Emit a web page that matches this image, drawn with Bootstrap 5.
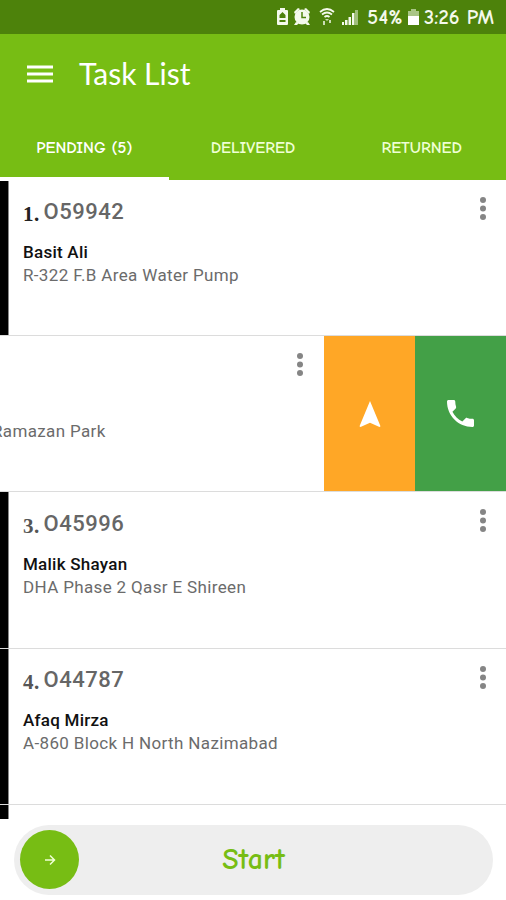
<!DOCTYPE html>
<html lang="en">
<head>
<meta charset="utf-8">
<meta name="viewport" content="width=device-width, initial-scale=1">
<title>Task List</title>
<link href="https://cdn.jsdelivr.net/npm/bootstrap@5.3.0/dist/css/bootstrap.min.css" rel="stylesheet">
<style>
body{font-family:Roboto,"Liberation Sans",sans-serif;height:900px;overflow:hidden;background:#fff}
.status{height:34px;background:#4d820b;color:#f4f9ec;font:700 20.5px/34px "Comic Neue",Lato,sans-serif;padding-right:12px}
.status span{white-space:nowrap;position:relative;top:1px}
.status .pct{letter-spacing:.5px;margin-left:6px}
.appbar{background:#77bd14;height:146px;color:#fff}
.titlebar{height:80px;padding-left:27px;gap:26px}
.titlebar h1{font:400 30px/34px Lato,sans-serif;letter-spacing:0;padding-bottom:2px}
.tabs .tab{width:168.67px;height:66px;border:0;border-bottom:3px solid transparent;background:none;color:#efffd5;font:700 16.7px/20px "Comic Neue",Lato,sans-serif;padding:4px 0 0}
.tabs .tab.active{border-bottom:3px solid #fff;color:#fff}
.task{height:156.2px;border-bottom:1.5px solid #dcdcdc}
.stripe{width:9px;background:#000;border-right:1px solid #888;flex:none}
.task:first-child .stripe{margin-top:1px}
.info{padding:18.5px 0 0 14px;white-space:nowrap}
.code{height:26px;color:#666;font-size:22px;line-height:26px;font-weight:500;letter-spacing:.5px}
.idx{font:700 21px/26px "Liberation Serif",serif;color:#222;width:20.5px;letter-spacing:.5px;position:relative;top:2px}
.idx.soft{color:#555}
.person{margin-top:16px;color:#111;font-size:17px;line-height:22px;font-weight:500;letter-spacing:.25px}
.place{font-size:17px;line-height:25px;color:#6b6b6b;letter-spacing:.35px}
.more{margin:15px 15px 0 auto;align-self:flex-start;line-height:0}
.act{width:91px;flex:none}
.go{background:#ffa726}.call{background:#43a047;width:91.5px}
.slid{width:324px;flex:none;overflow:hidden}
.slid .place{margin:83px 0 0 -8px;white-space:nowrap}
.slid .more{margin-right:16px}
.tail{height:14px}
.starter{margin:6px 13px 0 14px;height:70px;border-radius:35px;background:#eee;padding-left:6px;color:#77bd14}
.knob{width:59px;height:59px;background:#77bd14;flex:none}
.starter .label{font:700 30px/30px "Comic Neue",Lato,sans-serif;flex:1;text-align:center;padding-right:65px;padding-left:59px;margin-left:-59px}
</style>
</head>
<body>
<header>
<div class="status d-flex align-items-center justify-content-end">
<svg width="86" height="34" viewBox="0 0 86 34" fill="#f4f9ec">
<path d="M3 10h2V8h5v2h2q1 0 1 1v13q0 1-1 1H3q-1 0-1-1V11q0-1 1-1z"/><path d="M4.500 15 7.500 12l3 3v3h-6zM4.500 20h6v2h-6z" fill="#4d820b"/>
<circle cx="27" cy="17" r="7.500"/><path d="M19 12l4-4 2 1-5 5zM35 12l-4-4-2 1 5 5zM21 22l-2 3h3l2-2zM33 22l2 3h-3l-2-2z"/><path d="M27 12v5.500h4" fill="none" stroke="#4d820b" stroke-width="1.500"/>
<g fill="none" stroke="#f4f9ec" stroke-width="1.700"><path d="M45 12q7-6 14 0M47 14.500q5-4 10 0M49.500 17q2.500-2 5 0"/></g><path d="M50 19h4l-2 2zM48 21h2v4h-2zM54 20h2v3h-2z" opacity=".75"/>
<path d="M67 25v-3h2v3zM70 25v-5h2.500v5zM73.500 25v-8h2.500v8zM77 25V13h2.500v12z"/><path d="M80 25V10h3v15z" opacity=".5"/>
</svg>
<span class="pct">54%</span>
<svg class="ms-1" width="13" height="34" viewBox="0 0 13 34"><path d="M1 11h3V9h5v2h3v6H1z" fill="#a9c586"/><path d="M1 16h11v9H1z" fill="#fff"/></svg>
<span class="ms-1">3:26 PM</span>
</div>
<div class="appbar">
<div class="titlebar d-flex align-items-center">
<svg width="26" height="20" viewBox="0 0 26 20" stroke="#fff" stroke-width="3"><path d="M0 3h26M0 10h26M0 17h26"/></svg>
<h1 class="m-0">Task List</h1>
</div>
<nav class="tabs d-flex">
<button class="tab active">PENDING (5)</button><button class="tab">DELIVERED</button><button class="tab">RETURNED</button>
</nav>
</div>
</header>
<main>
<article class="task d-flex"><div class="stripe"></div><div class="info"><div class="code d-flex"><span class="idx">1.</span><span>O59942</span></div><div class="person">Basit Ali</div><div class="place">R-322 F.B Area Water Pump</div></div>
<div class="more"><svg width="16" height="28" fill="#858585"><circle cx="8" cy="5" r="3"/><circle cx="8" cy="13.500" r="3"/><circle cx="8" cy="22" r="3"/></svg></div></article>
<article class="task d-flex"><div class="slid d-flex"><div class="place">Ramazan Park</div><div class="more"><svg width="16" height="28" fill="#858585"><circle cx="8" cy="5" r="3"/><circle cx="8" cy="13.500" r="3"/><circle cx="8" cy="22" r="3"/></svg></div></div>
<div class="act go d-flex align-items-center justify-content-center"><svg width="22" height="26" viewBox="0 0 22 26"><path d="M11 0 21.500 25.200 20.500 26 11 21.800 1.500 26 .500 25.200z" fill="#fff"/></svg></div>
<div class="act call d-flex align-items-center justify-content-center"><svg width="27" height="27" viewBox="3 3 18 18"><path d="M6.620 10.790c1.440 2.830 3.760 5.140 6.590 6.590l2.200-2.200c.270-.270.670-.360 1.020-.240 1.120.370 2.330.570 3.570.570.550 0 1 .450 1 1V20c0 .550-.450 1-1 1-9.390 0-17-7.610-17-17 0-.550.450-1 1-1h3.500c.550 0 1 .450 1 1 0 1.250.200 2.450.570 3.570.110.350.030.740-.250 1.020z" fill="#fff"/></svg></div></article>
<article class="task d-flex"><div class="stripe"></div><div class="info"><div class="code d-flex"><span class="idx soft">3.</span><span>O45996</span></div><div class="person">Malik Shayan</div><div class="place">DHA Phase 2 Qasr E Shireen</div></div>
<div class="more"><svg width="16" height="28" fill="#858585"><circle cx="8" cy="5" r="3"/><circle cx="8" cy="13.500" r="3"/><circle cx="8" cy="22" r="3"/></svg></div></article>
<article class="task d-flex"><div class="stripe"></div><div class="info"><div class="code d-flex"><span class="idx soft">4.</span><span>O44787</span></div><div class="person">Afaq Mirza</div><div class="place">A-860 Block H North Nazimabad</div></div>
<div class="more"><svg width="16" height="28" fill="#858585"><circle cx="8" cy="5" r="3"/><circle cx="8" cy="13.500" r="3"/><circle cx="8" cy="22" r="3"/></svg></div></article>
<div class="stripe tail"></div>
</main>
<footer class="starter d-flex align-items-center">
<div class="knob rounded-circle d-flex align-items-center justify-content-center"><svg width="12" height="12" viewBox="0 0 12 12" fill="none" stroke="#efffd5" stroke-width="1.500"><path d="M1 6h9M6 1.500 10.500 6 6 10.500"/></svg></div>
<div class="label">Start</div>
</footer>
<script src="https://cdn.jsdelivr.net/npm/bootstrap@5.3.0/dist/js/bootstrap.bundle.min.js"></script>
</body>
</html>
